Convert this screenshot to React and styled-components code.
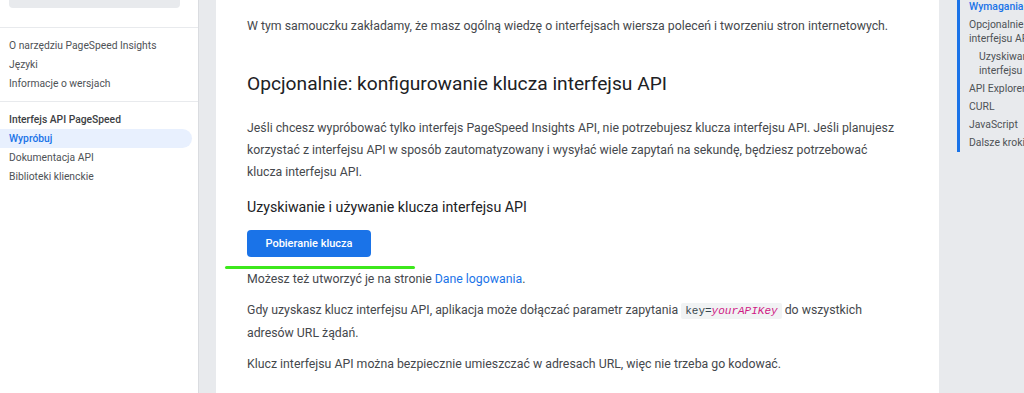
import React from "react";
import styled, { createGlobalStyle } from "styled-components";

const GlobalStyle = createGlobalStyle`
  html, body {
    margin: 0;
    padding: 0;
  }
  body {
    font-family: Roboto, "Liberation Sans", Arial, sans-serif;
    background: #e8eaed;
  }
`;

const Page = styled.div`
  display: flex;
  width: 1024px;
  height: 393px;
  overflow: hidden;
  background: #e8eaed;
`;

const Sidebar = styled.nav`
  flex: 0 0 198px;
  background: #ffffff;
  border-right: 1px solid #dadce0;
`;

const SearchBox = styled.div`
  height: 8px;
  margin: 0 18px 0 9px;
  background: #e8eaed;
  border-radius: 0 0 4px 4px;
`;

const Divider = styled.div`
  height: 1px;
  background: #e8eaed;
  margin-top: ${(p) => p.$top || 0}px;
`;

const NavList = styled.ul`
  list-style: none;
  margin: 0;
  padding: 8px 6px 8px 0;
`;

const NavItem = styled.li`
  height: 19px;
  line-height: 19px;
  padding-left: 9px;
  font-size: 10.3px;
  color: ${(p) => (p.$active ? "#1a73e8" : p.$heading ? "#3c4043" : "#4e5256")};
  font-weight: ${(p) => (p.$active || p.$heading ? 500 : 400)};
  background: ${(p) => (p.$active ? "#e8f0fe" : "transparent")};
  border-radius: 0 10px 10px 0;
  white-space: nowrap;
`;

const Main = styled.main`
  position: relative;
  flex: 0 0 692px;
  margin-left: 17px;
  padding: 15px 0 0 31px;
  background: #ffffff;
`;

const Text = styled.p`
  margin: 0 0 ${(p) => p.$gap ?? 9}px;
  width: 656px;
  font-size: 12.3px;
  line-height: 22px;
  color: #45484c;
`;

const Title = styled.h2`
  margin: 31px 0 17px;
  font-weight: 400;
  font-size: 19.2px;
  line-height: 32px;
  color: #202124;
`;

const Subtitle = styled.h3`
  margin: 11px 0 10px;
  font-weight: 400;
  font-size: 14.2px;
  line-height: 26px;
  color: #202124;
`;

const Button = styled.button`
  display: block;
  width: 124px;
  height: 27px;
  margin: 0 0 11px;
  padding: 0;
  border: none;
  border-radius: 4px;
  background: #1a73e8;
  color: #ffffff;
  font-family: Roboto, "Liberation Sans", sans-serif;
  font-size: 11px;
  font-weight: 500;
  cursor: pointer;
`;

const Highlight = styled.div`
  position: absolute;
  left: 9px;
  top: 266px;
  width: 190px;
  height: 3px;
  border-radius: 2px;
  background: #3de81c;
`;

const Link = styled.a`
  color: #1a73e8;
  text-decoration: none;
`;

const Code = styled.code`
  font-family: "Liberation Mono", "DejaVu Sans Mono", monospace;
  font-size: 11px;
  padding: 2px 4px;
  background: #f1f3f4;
  color: #37474f;
  border-radius: 2px;
`;

const Var = styled.var`
  color: #d01884;
  font-style: italic;
`;

const Toc = styled.aside`
  flex: 0 0 175px;
  margin-left: 18px;
`;

const TocList = styled.ul`
  list-style: none;
  margin: -2px 0 0;
  padding: 0 0 0 9px;
  border-left: 3px solid #1a73e8;
`;

const TocItem = styled.li`
  padding: 2px 0 2px ${(p) => (p.$sub ? 10 : 0)}px;
  font-size: 10.4px;
  line-height: 14px;
  color: ${(p) => (p.$active ? "#1a73e8" : "#4e5256")};
  font-weight: ${(p) => (p.$active ? 500 : 400)};
`;

const sideTop = ["O narzędziu PageSpeed Insights", "Języki", "Informacje o wersjach"];

const toc = [
  { label: "Wymagania", active: true },
  { label: "Opcjonalnie: konfigurowanie klucza interfejsu API" },
  { label: "Uzyskiwanie i używanie klucza interfejsu API", sub: true },
  { label: "API Explorer" },
  { label: "CURL" },
  { label: "JavaScript" },
  { label: "Dalsze kroki" },
];

export default function App() {
  return (
    <>
      <GlobalStyle />
      <Page>
        <Sidebar>
          <SearchBox />
          <Divider $top={19} />
          <NavList>
            {sideTop.map((item) => (
              <NavItem key={item}>{item}</NavItem>
            ))}
          </NavList>
          <Divider />
          <NavList>
            <NavItem $heading>Interfejs API PageSpeed</NavItem>
            <NavItem $active>Wypróbuj</NavItem>
            <NavItem>Dokumentacja API</NavItem>
            <NavItem>Biblioteki klienckie</NavItem>
          </NavList>
        </Sidebar>

        <Main>
          <Text $gap={0}>
            W tym samouczku zakładamy, że masz ogólną wiedzę o interfejsach wiersza poleceń i
            tworzeniu stron internetowych.
          </Text>
          <Title>Opcjonalnie: konfigurowanie klucza interfejsu API</Title>
          <Text $gap={0}>
            Jeśli chcesz wypróbować tylko interfejs PageSpeed Insights API, nie potrzebujesz klucza
            interfejsu API. Jeśli planujesz korzystać z interfejsu API w sposób zautomatyzowany i
            wysyłać wiele zapytań na sekundę, będziesz potrzebować klucza interfejsu API.
          </Text>
          <Subtitle>Uzyskiwanie i używanie klucza interfejsu API</Subtitle>
          <Button>Pobieranie klucza</Button>
          <Highlight />
          <Text>
            Możesz też utworzyć je na stronie <Link href="#">Dane logowania</Link>.
          </Text>
          <Text>
            Gdy uzyskasz klucz interfejsu API, aplikacja może dołączać parametr zapytania{" "}
            <Code>
              key=<Var>yourAPIKey</Var>
            </Code>{" "}
            do wszystkich adresów URL żądań.
          </Text>
          <Text>
            Klucz interfejsu API można bezpiecznie umieszczać w adresach URL, więc nie trzeba go
            kodować.
          </Text>
        </Main>

        <Toc>
          <TocList>
            {toc.map((t) => (
              <TocItem key={t.label} $active={t.active} $sub={t.sub}>
                {t.label}
              </TocItem>
            ))}
          </TocList>
        </Toc>
      </Page>
    </>
  );
}
